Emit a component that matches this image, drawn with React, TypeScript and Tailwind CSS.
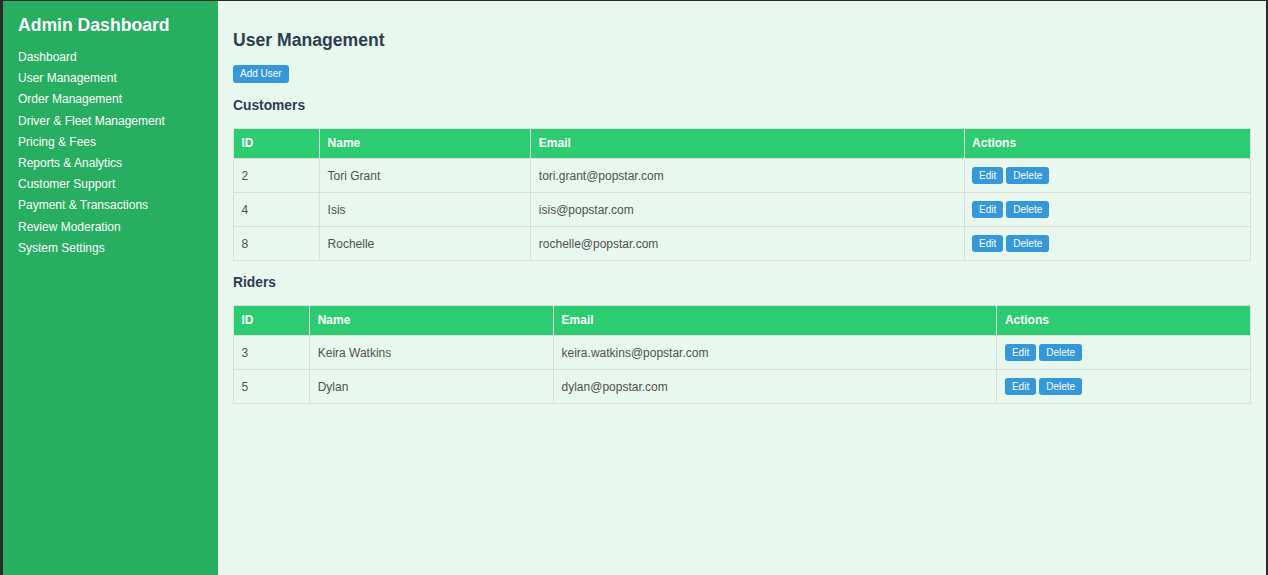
import React from "react";

const nav = [
  "Dashboard",
  "User Management",
  "Order Management",
  "Driver & Fleet Management",
  "Pricing & Fees",
  "Reports & Analytics",
  "Customer Support",
  "Payment & Transactions",
  "Review Moderation",
  "System Settings",
];

type Row = { id: number; name: string; email: string };

const customers: Row[] = [
  { id: 2, name: "Tori Grant", email: "tori.grant@popstar.com" },
  { id: 4, name: "Isis", email: "isis@popstar.com" },
  { id: 8, name: "Rochelle", email: "rochelle@popstar.com" },
];

const riders: Row[] = [
  { id: 3, name: "Keira Watkins", email: "keira.watkins@popstar.com" },
  { id: 5, name: "Dylan", email: "dylan@popstar.com" },
];

function Btn({ children, tall }: { children: React.ReactNode; tall?: boolean }) {
  return (
    <button
      className={
        tall
          ? "bg-[#3498db] text-white text-[10px] leading-[12px] px-[7px] py-[3px] rounded-[3px]"
          : "bg-[#3498db] text-white text-[10px] leading-[11px] px-[7px] py-[3px] rounded-[3px]"
      }
    >
      {children}
    </button>
  );
}

function UserTable({ rows }: { rows: Row[] }) {
  const th = "border border-[#dddddd] bg-[#2ecc71] text-white font-bold text-left px-[7.5px] py-[8px] leading-[13px]";
  const td = "border border-[#dddddd] text-[#505050] px-[7.5px] py-[8px] leading-[14px]";
  return (
    <table className="w-full border-collapse text-[12px]">
      <thead>
        <tr>
          <th className={th}>ID</th>
          <th className={th}>Name</th>
          <th className={th}>Email</th>
          <th className={th}>Actions</th>
        </tr>
      </thead>
      <tbody>
        {rows.map((r) => (
          <tr key={r.id}>
            <td className={td}>{r.id}</td>
            <td className={td}>{r.name}</td>
            <td className={td}>{r.email}</td>
            <td className={td}>
              <div className="flex gap-[3px]">
                <Btn>Edit</Btn>
                <Btn>Delete</Btn>
              </div>
            </td>
          </tr>
        ))}
      </tbody>
    </table>
  );
}

export default function App() {
  return (
    <div
      className="h-[575px] w-[1268px] bg-[#2a2a2a] pt-[1px] pl-[3px] pr-[2px] flex overflow-hidden"
      style={{ fontFamily: '"Liberation Sans", Arial, sans-serif' }}
    >
      <aside className="w-[215px] shrink-0 bg-[#27ae60] text-white px-[15px] pt-[14px]">
        <h1 className="text-[17.6px] font-bold leading-[20px]">Admin Dashboard</h1>
        <ul className="mt-[12px]">
          {nav.map((n) => (
            <li key={n} className="text-[12px] leading-[21.2px]">
              {n}
            </li>
          ))}
        </ul>
      </aside>
      <main className="flex-1 bg-[#e8f8ef] px-[15px] pt-[29px] text-[#2c3e50]">
        <h2 className="text-[17.6px] font-bold leading-[20px]">User Management</h2>
        <div className="mt-[15px] flex">
          <Btn tall>Add User</Btn>
        </div>
        <h3 className="text-[13.8px] font-bold leading-[16px] mt-[15px] mb-[14px]">Customers</h3>
        <UserTable rows={customers} />
        <h3 className="text-[13.8px] font-bold leading-[16px] mt-[14px] mb-[14px]">Riders</h3>
        <UserTable rows={riders} />
      </main>
    </div>
  );
}
